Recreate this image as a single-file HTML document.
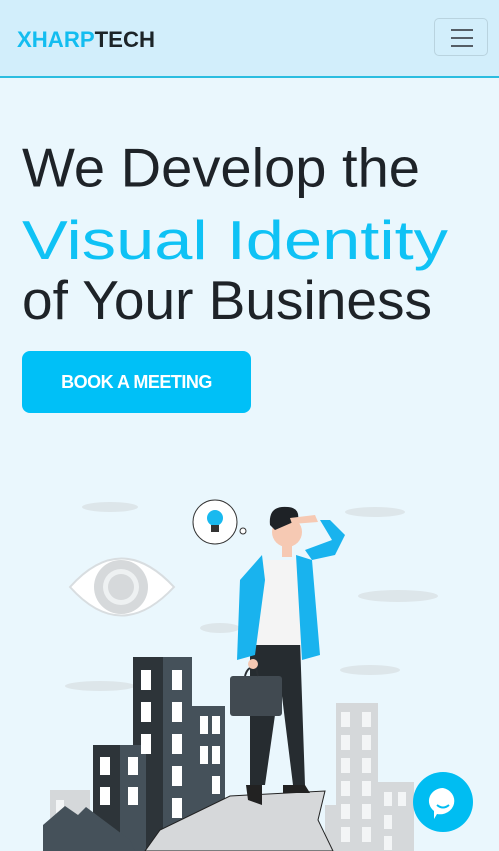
<!DOCTYPE html>
<html><head><meta charset="utf-8"><style>
html,body{margin:0;padding:0;width:499px;height:851px;overflow:hidden;background:#eaf7fd;font-family:"Liberation Sans",sans-serif}
.hdr{position:absolute;left:0;top:0;width:499px;height:76px;background:#d2eefb;border-bottom:2px solid #2bbde0}
.tog{position:absolute;left:434px;top:18px;width:54px;height:38px;border:1px solid #b9d3df;border-radius:5px;box-sizing:border-box}
.tog i{position:absolute;left:16px;width:22px;height:2px;background:#555e66}
.btn{position:absolute;left:22px;top:351px;width:229px;height:62px;background:#00c0f7;border-radius:8px;color:#fff;font-weight:bold;font-size:18px;line-height:62px;text-align:center;letter-spacing:-0.5px}
</style></head><body>
<div class="hdr">
<svg width="200" height="76" style="position:absolute;left:0;top:0">
<text x="17" y="47" font-family="Liberation Sans" font-weight="bold" font-size="22" textLength="138" lengthAdjust="spacingAndGlyphs"><tspan fill="#13bdf0">XHARP</tspan><tspan fill="#1c2428">TECH</tspan></text>
</svg>
<div class="tog"><i style="top:10px"></i><i style="top:18px"></i><i style="top:26px"></i></div>
</div>
<svg width="499" height="851" style="position:absolute;left:0;top:0">
<g font-family="Liberation Sans" font-size="50">
<text x="22" y="186" fill="#1e2328" textLength="398" lengthAdjust="spacingAndGlyphs" transform="translate(0,-18) scale(1,1.1)">We Develop the</text>
<text x="22" y="258" fill="#0fc2f5" textLength="426" lengthAdjust="spacingAndGlyphs" transform="translate(0,-25) scale(1,1.1)">Visual Identity</text>
<text x="22" y="318" fill="#1e2328" textLength="410" lengthAdjust="spacingAndGlyphs" transform="translate(0,-31) scale(1,1.1)">of Your Business</text>
</g>
<g fill="#dde6ea">
<ellipse cx="110" cy="507" rx="28" ry="5"/><ellipse cx="375" cy="512" rx="30" ry="5"/>
<ellipse cx="398" cy="596" rx="40" ry="6"/><ellipse cx="220" cy="628" rx="20" ry="5"/>
<ellipse cx="100" cy="686" rx="35" ry="5"/><ellipse cx="370" cy="670" rx="30" ry="5"/>
</g>
<path d="M70 587 Q121 530 174 587 Q121 644 70 587Z" fill="#fff" stroke="#d8dde0" stroke-width="2"/>
<circle cx="121" cy="587" r="27" fill="#d6d9db"/><circle cx="121" cy="587" r="18" fill="#eef1f2"/><circle cx="121" cy="587" r="13" fill="#d6d9db"/>
<circle cx="215" cy="522" r="22" fill="#fff" stroke="#333" stroke-width="1"/>
<circle cx="243" cy="531" r="3" fill="#fff" stroke="#333" stroke-width="1"/>
<circle cx="215" cy="518" r="8" fill="#19b9ef"/><rect x="211" y="525" width="8" height="7" fill="#333"/>
<g fill="#d5d8da">
<rect x="336" y="703" width="42" height="148"/><rect x="378" y="782" width="36" height="69"/><rect x="50" y="790" width="40" height="61"/><rect x="325" y="805" width="12" height="46"/>
</g>
<g fill="#f3f5f6">
<rect x="341" y="712" width="9" height="15"/><rect x="362" y="712" width="9" height="15"/>
<rect x="341" y="735" width="9" height="15"/><rect x="362" y="735" width="9" height="15"/>
<rect x="341" y="758" width="9" height="15"/><rect x="362" y="758" width="9" height="15"/>
<rect x="341" y="781" width="9" height="15"/><rect x="362" y="781" width="9" height="15"/>
<rect x="341" y="804" width="9" height="15"/><rect x="362" y="804" width="9" height="15"/>
<rect x="341" y="827" width="9" height="15"/><rect x="362" y="827" width="9" height="15"/>
<rect x="384" y="792" width="8" height="14"/><rect x="398" y="792" width="8" height="14"/>
<rect x="384" y="815" width="8" height="14"/><rect x="384" y="836" width="8" height="14"/>
<rect x="56" y="800" width="8" height="14"/>
</g>
<rect x="133" y="657" width="30" height="194" fill="#2d3439"/><rect x="163" y="657" width="29" height="194" fill="#45515a"/>
<rect x="192" y="706" width="33" height="145" fill="#45515a"/>
<rect x="93" y="745" width="27" height="106" fill="#2d3439"/><rect x="120" y="745" width="26" height="106" fill="#45515a"/>
<g fill="#fff">
<rect x="141" y="670" width="10" height="20"/><rect x="172" y="670" width="10" height="20"/>
<rect x="141" y="702" width="10" height="20"/><rect x="172" y="702" width="10" height="20"/>
<rect x="141" y="734" width="10" height="20"/><rect x="172" y="734" width="10" height="20"/>
<rect x="172" y="766" width="10" height="20"/><rect x="172" y="798" width="10" height="20"/>
<rect x="200" y="716" width="8" height="18"/><rect x="212" y="716" width="8" height="18"/>
<rect x="200" y="746" width="8" height="18"/><rect x="212" y="746" width="8" height="18"/>
<rect x="212" y="776" width="8" height="18"/>
<rect x="100" y="757" width="10" height="18"/><rect x="128" y="757" width="10" height="18"/>
<rect x="100" y="787" width="10" height="18"/><rect x="128" y="787" width="10" height="18"/>
</g>
<path d="M43 851 L43 825 L65 806 L78 815 L86 807 L130 840 L135 851Z" fill="#45515a"/>
<path d="M145 851 L160 830 L230 796 L325 791 L318 820 L333 851Z" fill="#d6d8da" stroke="#222" stroke-width="1"/>
<path d="M250 640 L300 640 L305 785 L293 785 L280 680 L265 785 L250 785Z" fill="#262c30"/>
<path d="M246 785 L262 785 L262 805 L248 800Z M283 785 L305 785 L310 793 L283 793Z" fill="#222"/>
<path d="M258 560 L300 560 L305 645 L252 645Z" fill="#f4f4f4"/>
<path d="M262 555 L240 580 L237 660 L255 655 L265 580Z M296 555 L312 560 L320 655 L302 660Z" fill="#19b3ee"/>
<path d="M312 560 L335 555 L345 535 L330 520 L320 520 L332 540 L305 550Z" fill="#19b3ee"/>
<circle cx="287" cy="532" r="15" fill="#f6c9b3"/>
<path d="M270 525 Q268 505 288 507 Q300 508 298 520 L275 530Z" fill="#1e2226"/>
<path d="M290 518 L315 515 L318 522 L292 524Z" fill="#f6c9b3"/>
<rect x="282" y="545" width="10" height="12" fill="#f6c9b3"/>
<rect x="230" y="676" width="52" height="40" rx="3" fill="#414a51"/>
<path d="M245 676 Q248 665 256 668 L258 676" fill="none" stroke="#2a2f33" stroke-width="2"/>
<circle cx="253" cy="664" r="5" fill="#f6c9b3"/>
</svg>
<div class="btn">BOOK A MEETING</div>
<svg width="62" height="62" style="position:absolute;left:412px;top:771px">
<circle cx="31" cy="31" r="30" fill="#00bdf2"/>
<path d="M31 17 A14 13 0 1 1 25 43 L22 48 L22 40 A14 13 0 0 1 31 17Z" fill="#fff"/>
<path d="M25 34 Q31 39 37 34" fill="none" stroke="#00bdf2" stroke-width="2"/>
</svg>
</body></html>
